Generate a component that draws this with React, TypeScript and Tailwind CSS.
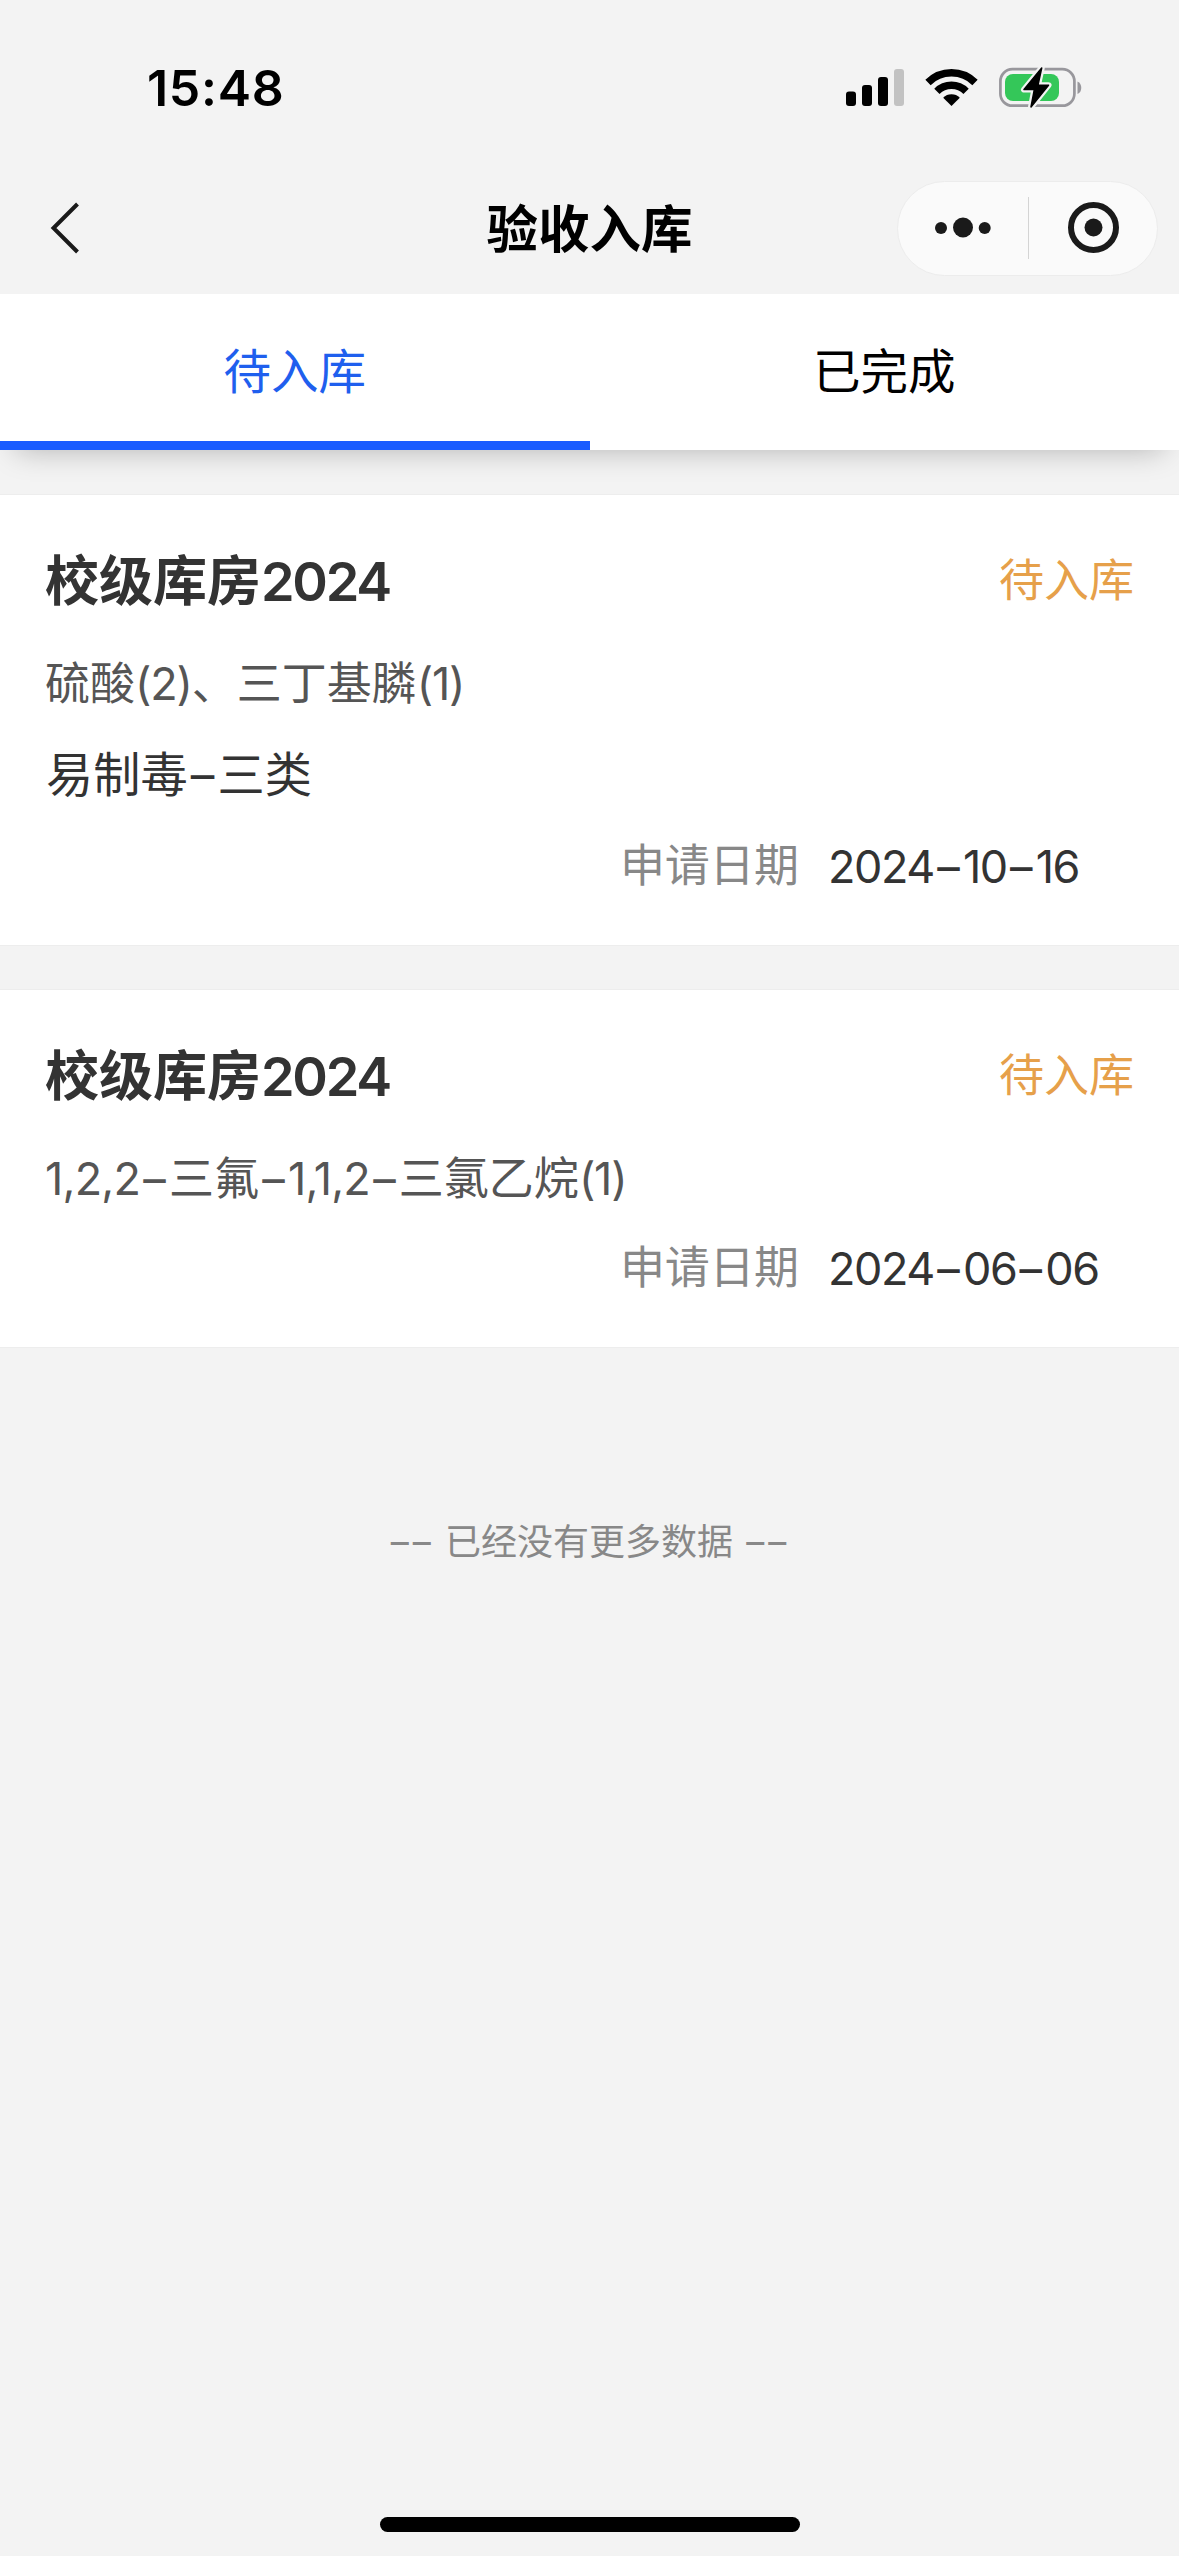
import { useState } from 'react';

const tabs = ['待入库', '已完成'];

const orders = [
  {
    id: 1,
    room: '校级库房2024',
    status: '待入库',
    items: '硫酸(2)、三丁基膦(1)',
    category: '易制毒–三类',
    date: '2024–10–16',
  },
  {
    id: 2,
    room: '校级库房2024',
    status: '待入库',
    items: '1,2,2–三氟–1,1,2–三氯乙烷(1)',
    category: '',
    date: '2024–06–06',
  },
];

// Tightens digits and brackets, and gives dashes room on both sides
const MixedText = ({ text }: { text: string }) => (
  <>
    {text.split(/(–|\(\d+\)|[\d,]+)/).map((part, index) => {
      if (part === '–') return <span key={index} className="mx-[3.2px]">{part}</span>;
      if (part.startsWith('(')) return <span key={index} className="tracking-[-1.2px]">{part}</span>;
      if (/^\d{2,}$/.test(part)) return <span key={index} className="tracking-[-1.4px]">{part}</span>;
      if (/^[\d,]+$/.test(part)) return <span key={index} className="tracking-[-0.8px]">{part}</span>;
      return part;
    })}
  </>
);

const StatusBar = () => (
  <div className="h-[162px] pl-[147px] pr-[97px] pt-[58px] flex items-start justify-between">
    <span className="text-[50px] leading-[60px] tracking-[0.7px] font-semibold text-black">15:48</span>
    <svg className="w-[240px] h-[60px]" viewBox="0 0 240 60">
      {/* signal */}
      <rect x="4" y="33.5" width="10" height="14.5" rx="3" fill="#000" />
      <rect x="20" y="27" width="10" height="21" rx="3" fill="#000" />
      <rect x="36" y="19" width="10" height="29" rx="3" fill="#000" />
      <rect x="52" y="11" width="10" height="37" rx="3" fill="#c2c2c2" />
      {/* wifi */}
      <g fill="none" stroke="#000" strokeWidth="7.5">
        <path d="M86 24.5a33.3 33.3 0 0 1 47 0" />
        <path d="M94.9 33.4a20.7 20.7 0 0 1 29.2 0" />
      </g>
      <path d="M109.5 48l-8.300-8.300a11.700 11.700 0 0 1 16.600 0z" fill="#000" />
      {/* battery */}
      <rect x="158.4" y="11.2" width="74" height="36.5" rx="12" fill="none" stroke="#98979c" strokeWidth="2.7" />
      <rect x="163" y="16" width="54" height="27" rx="8" fill="#34c759" />
      <path d="M235.500 23.500c5 1.500 5 11 0 12.500z" fill="#98979c" />
      <path d="M199.700 10L182 31.600h10.300L189 49l17.500-21.800h-10.500z" fill="#000" stroke="#f3f3f3" strokeWidth="6" strokeLinejoin="round" />
      <path d="M199.700 10L182 31.600h10.300L189 49l17.500-21.800h-10.500z" fill="#000" stroke="#000" strokeWidth="1.500" strokeLinejoin="round" />
    </svg>
  </div>
);

const NavBar = () => (
  <div className="h-[132px] grid grid-cols-[1fr_auto_1fr] items-center">
    <svg className="ml-[48px] w-[36px] h-[56px]" viewBox="0 0 36 56">
      <path d="M29.500 4L5.500 28l24 24" fill="none" stroke="#1a1a1a" strokeWidth="4" />
    </svg>
    <h1 className="pt-px text-[51.5px] leading-[72px] font-bold text-black">验收入库</h1>
    <div className="justify-self-end mr-[21px] w-[261px] h-[95px] rounded-full border border-[#ececec] bg-[#fafafa] flex items-center">
      <svg className="w-[130px] h-[60px]" viewBox="0 0 130 60" fill="#1a1a1a">
        <circle cx="43" cy="30" r="6" />
        <circle cx="65" cy="29.500" r="10" />
        <circle cx="86.700" cy="30" r="6" />
      </svg>
      <div className="w-px h-[62px] bg-[#d4d4d4]" />
      <svg className="w-[128px] h-[60px]" viewBox="0 0 128 60">
        <circle cx="64.500" cy="29.500" r="22.500" fill="none" stroke="#1a1a1a" strokeWidth="6" />
        <circle cx="64.500" cy="29.500" r="9" fill="#1a1a1a" />
      </svg>
    </div>
  </div>
);

const OrderCard = ({ order }: { order: (typeof orders)[number] }) => (
  <div className="bg-white pl-[45px] pr-[45px] pt-[50px] pb-[34px] outline outline-[#ededed]">
    <div className="flex items-center justify-between h-[72px]">
      <h2 className="text-[54px] font-bold text-[#333]">
        {order.room.slice(0, 4)}
        <span className="font-semibold tracking-[-2.3px]">{order.room.slice(4)}</span>
      </h2>
      <span className="text-[45px] text-[#e6a04a]">{order.status}</span>
    </div>
    <p className="mt-[21px] h-[90px] leading-[91px] text-[45px] text-[#555]">
      <MixedText text={order.items} />
    </p>
    {order.category && (
      <p className="pl-px h-[93px] leading-[93px] text-[47.2px] text-[#333]">
        <MixedText text={order.category} />
      </p>
    )}
    <div className="flex h-[90px] items-center pl-[575px]">
      <span className="w-[208px] text-[45px] tracking-[-0.3px] text-[#888]">申请日期</span>
      <span className="pt-px text-[45px] text-[#333]">
        <MixedText text={order.date} />
      </span>
    </div>
  </div>
);

const App = () => {
  const [activeTab, setActiveTab] = useState(0);

  return (
    <div className="w-[1179px] h-[2556px] flex flex-col bg-[#f3f3f3] overflow-hidden whitespace-nowrap font-['Inter','Noto_Sans_CJK_SC',sans-serif]">
      <StatusBar />
      <NavBar />

      {/* Tabs */}
      <div className="relative flex h-[156px] shrink-0 bg-white shadow-[0_16px_28px_-16px_rgba(0,0,0,0.27)]">
        {tabs.map((tab, index) => (
          <button
            key={tab}
            onClick={() => setActiveTab(index)}
            className={
              activeTab === index
                ? 'flex-1 pt-[9px] text-[47.5px] text-[#1f5fee] border-b-[9px] border-[#1a5cff]'
                : 'flex-1 pt-[9px] text-[47.5px] text-black border-b-[9px] border-transparent'
            }
          >
            {tab}
          </button>
        ))}
      </div>

      {/* Order list */}
      <div className="mt-[45px] flex flex-col gap-[45px]">
        {orders.map((order) => (
          <OrderCard key={order.id} order={order} />
        ))}
      </div>

      <p className="mt-[168px] text-center text-[36px] leading-[54px] text-[#888]">
        <span className="tracking-[4px]">––</span> 已经没有更多数据 <span className="ml-[3px] mr-[-2px] tracking-[4px]">––</span>
      </p>

      {/* Home indicator */}
      <div className="mt-auto mb-[24px] mx-auto w-[420px] h-[15px] rounded-full bg-black" />
    </div>
  );
};

export default App;
